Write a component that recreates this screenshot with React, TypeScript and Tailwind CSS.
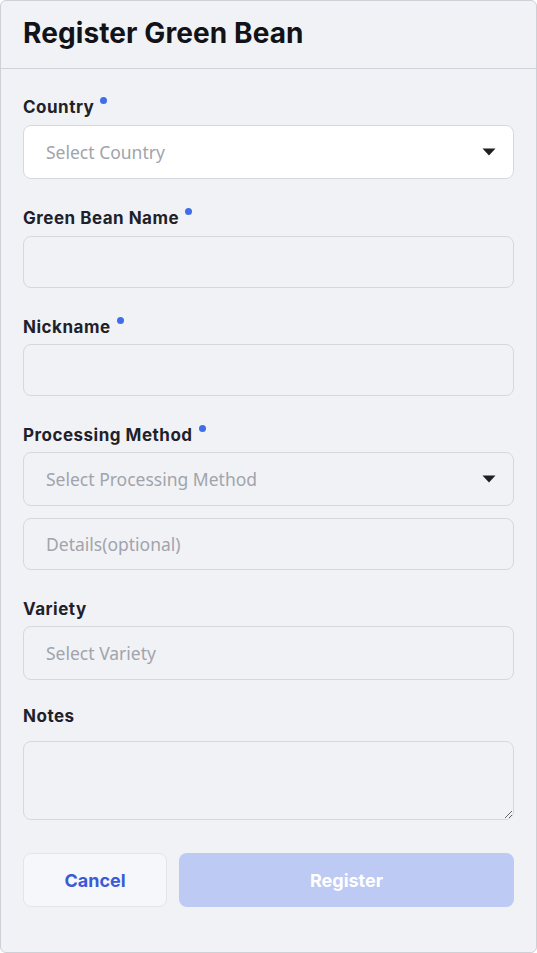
import type { ReactNode } from "react";

function Dot() {
  return <span className="ml-[6px] mt-[-15px] inline-block h-[7px] w-[7px] rounded-full bg-[#3f6ee8]" />;
}

function Label({ children, required }: { children: ReactNode; required?: boolean }) {
  return (
    <div className="flex h-6 items-center pt-[5px] text-[17px] font-bold tracking-[0.5px] text-[#1e2129] [font-family:Inter,sans-serif]">
      {children}
      {required && <Dot />}
    </div>
  );
}

function Caret() {
  return (
    <svg width="14" height="8" viewBox="0 0 14 8" className="shrink-0">
      <path d="M0.5 0.5 L13.5 0.5 L7 7.5 Z" fill="#1f1f22" />
    </svg>
  );
}

function SelectBox({ placeholder, white, caret = true }: { placeholder: string; white?: boolean; caret?: boolean }) {
  return (
    <div
      className={`flex h-[54px] items-center justify-between rounded-lg border border-[#d6d8dd] pl-[22px] pr-[17px] ${
        white ? "bg-white" : "bg-[#f1f2f6]"
      }`}
    >
      <span className="text-[17.5px] text-[#a1a4ab] [font-family:'Noto_Sans',sans-serif]">{placeholder}</span>
      {caret && <Caret />}
    </div>
  );
}

function TextBox({ placeholder }: { placeholder?: string }) {
  return (
    <input
      placeholder={placeholder}
      className="h-[52px] w-full rounded-lg border border-[#d6d8dd] bg-[#f1f2f6] pl-[22px] text-[17.5px] text-[#1e2129] outline-none placeholder:text-[#a1a4ab] [font-family:'Noto_Sans',sans-serif]"
    />
  );
}

export default function App() {
  return (
    <div className="flex h-[953px] w-[537px] flex-col overflow-hidden rounded-md border border-[#cdd0d6] bg-[#f1f2f6]">
      <div className="flex h-[68px] shrink-0 items-center border-b border-[#cfd2d8] px-[22px] pb-[4px]">
        <h1 className="text-[28px] font-bold tracking-[0.1px] text-[#121318] [font-family:Inter,sans-serif]">
          Register Green Bean
        </h1>
      </div>

      <div className="flex flex-1 flex-col px-[22px] pt-[24px]">
        <Label required>Country</Label>
        <div className="mt-2">
          <SelectBox placeholder="Select Country" white />
        </div>

        <div className="mt-[25px]">
          <Label required>Green Bean Name</Label>
        </div>
        <div className="mt-[8px]">
          <TextBox />
        </div>

        <div className="mt-[25px]">
          <Label required>Nickname</Label>
        </div>
        <div className="mt-[7px]">
          <TextBox />
        </div>

        <div className="mt-[25px]">
          <Label required>Processing Method</Label>
        </div>
        <div className="mt-[7px]">
          <SelectBox placeholder="Select Processing Method" />
        </div>
        <div className="mt-[12px]">
          <TextBox placeholder="Details(optional)" />
        </div>

        <div className="mt-[25px]">
          <Label>Variety</Label>
        </div>
        <div className="mt-[7px]">
          <SelectBox placeholder="Select Variety" caret={false} />
        </div>

        <div className="mt-[22px]">
          <Label>Notes</Label>
        </div>
        <textarea className="mt-[15px] h-[79px] w-full resize-y rounded-lg border border-[#d6d8dd] bg-[#f1f2f6] px-[22px] py-3 text-[16px] outline-none [font-family:'Noto_Sans',sans-serif]" />

        <div className="mt-[33px] flex gap-3">
          <button className="h-[54px] w-[144px] rounded-lg border border-[#e3e5ea] bg-[#f6f7fa] text-[18px] font-bold text-[#3c5ad8] [font-family:Inter,sans-serif]">
            Cancel
          </button>
          <button className="h-[54px] flex-1 rounded-lg bg-[#bccaf4] text-[18px] font-bold text-white [font-family:Inter,sans-serif]">
            Register
          </button>
        </div>
      </div>
    </div>
  );
}
